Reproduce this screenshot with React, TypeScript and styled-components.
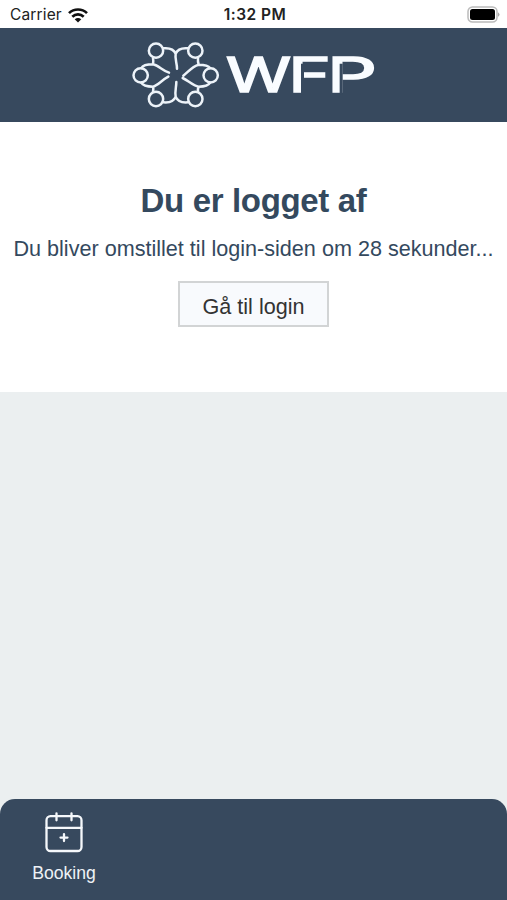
import React from 'react';
import styled, { createGlobalStyle } from 'styled-components';

const navy = '#37495e';

const GlobalStyle = createGlobalStyle`
  * { box-sizing: border-box; }
  body { margin: 0; background: #ebeff0; }
`;

const Screen = styled.div`
  display: flex;
  flex-direction: column;
  height: 900px;
  width: 507px;
  overflow: hidden;
  background: #ebeff0;
  font-family: 'Liberation Sans', Arial, sans-serif;
`;

const StatusBar = styled.div`
  display: grid;
  grid-template-columns: 1fr auto 1fr;
  align-items: center;
  height: 28px;
  padding: 2px 7px 0 10px;
  background: #fff;
  color: #222;
  font: 400 15.5px/26px Inter, sans-serif;
`;

const Carrier = styled.div`
  display: flex;
  align-items: center;
  gap: 6px;
  letter-spacing: 0.15px;
`;

const Clock = styled.div`
  font-weight: 600;
  font-size: 15.5px;
  letter-spacing: 0.5px;
`;

const BatterySlot = styled.div`
  display: flex;
  justify-content: flex-end;
  margin-top: -2px;
`;

const Header = styled.header`
  height: 94px;
  padding: 7px 0 0 125px;
  background: ${navy};
  svg { display: block; }
`;

const Panel = styled.main`
  display: flex;
  flex-direction: column;
  align-items: center;
  height: 270px;
  padding-top: 60px;
  background: #fff;
  color: #34495e;
`;

const Title = styled.h1`
  margin: 0;
  font-size: 33px;
  line-height: 38px;
  font-weight: 700;
  letter-spacing: -0.35px;
  white-space: nowrap;
`;

const Message = styled.p`
  margin: 16px 0 0;
  font-size: 21.6px;
  line-height: 26px;
  white-space: nowrap;
`;

const LoginButton = styled.button`
  width: 151px;
  height: 46px;
  margin-top: 19px;
  padding: 5px 0 0;
  border: 2px solid #d2d4d5;
  background: #f8fafd;
  color: #333;
  font: 400 21.6px/26px 'Liberation Sans', Arial, sans-serif;
`;

const TabBar = styled.nav`
  display: flex;
  height: 101px;
  margin-top: auto;
  background: ${navy};
  border-radius: 15px 15px 0 0;
`;

const Tab = styled.div`
  display: flex;
  flex-direction: column;
  align-items: center;
  width: 128px;
  padding-top: 13px;
  color: #eef2f6;
  font-size: 17.6px;
  line-height: 22px;
  gap: 8px;
`;

const WifiIcon = () => (
  <svg width="20" height="15" viewBox="0 0 20 15" fill="none" stroke="#111" strokeWidth="2.7">
    <path d="M1 5.1C6 .3 14 .3 19 5.1" />
    <path d="M4.3 8.7C7.5 5.7 12.5 5.7 15.7 8.7" />
    <path d="M10 14.6 6.7 11.3Q10 8.5 13.3 11.3Z" fill="#111" stroke="none" />
  </svg>
);

const BatteryIcon = () => (
  <svg width="33" height="17" viewBox="0 0 33 17">
    <rect x="1" y="1" width="29" height="15" rx="4.5" fill="#fff" stroke="#bbb" strokeWidth="1.5" />
    <rect x="3" y="3" width="25" height="11" rx="2.5" fill="#000" />
    <path d="M31 6.2Q34 8.5 31 10.8Z" fill="#aaa" />
  </svg>
);

const Logo = () => (
  <svg width="260" height="80" viewBox="0 0 780 240">
    <g fill="none" stroke="#edf3f9" strokeWidth="7.5" strokeLinecap="round" strokeLinejoin="round">
      <circle cx="93" cy="47" r="21.5" />
      <circle cx="211" cy="47" r="21.5" />
      <circle cx="47" cy="121" r="21.5" />
      <circle cx="257" cy="121" r="21.5" />
      <circle cx="93" cy="192" r="21.5" />
      <circle cx="211" cy="192" r="21.5" />
      <path d="M115 40C135 38 147 44 152 56C157 44 169 38 189 40M152 56C149 72 156 84 156 101" />
      <path d="M115 202C135 204 147 198 152 185C157 198 169 204 189 202M152 185C149 170 154 157 154 141" />
      <path d="M84 69Q86 80 84 88C68 88 54 90 49 99M84 88C101 91 111 106 132 113" />
      <path d="M49 143C54 153 68 155 84 155Q86 161 84 170M84 155C98 151 111 135 130 125" />
      <path d="M219 69Q218 80 221 89C236 89 250 91 255 99M221 89C202 94 190 110 175 122" />
      <path d="M255 143C250 153 236 155 221 155Q218 161 219 170M221 155C203 151 190 137 173 129" />
    </g>
    <g fill="#f9fcff" stroke="#f9fcff" strokeWidth="5" fontFamily="Inter, sans-serif" fontWeight="400" fontSize="145">
      <text x="303" y="172" textLength="195" lengthAdjust="spacingAndGlyphs">W</text>
      <text x="490" y="172" textLength="128" lengthAdjust="spacingAndGlyphs">F</text>
      <text x="606" y="172" textLength="150" lengthAdjust="spacingAndGlyphs">P</text>
    </g>
    <path d="M532.5 86v92M648.5 86v92" stroke={navy} strokeWidth="9" />
  </svg>
);

const CalendarIcon = () => (
  <svg width="38" height="42" viewBox="0 0 38 42" fill="none" stroke="#f5f8fb" strokeWidth="2.3" strokeLinecap="round">
    <rect x="1.5" y="4.2" width="35" height="34.8" rx="4" />
    <path d="M1.5 15.8h35M11.5 1.3v7M26.5 1.3v7M15.5 25.6h7M19 22.1v7" />
  </svg>
);

export default function App() {
  return (
    <>
      <GlobalStyle />
      <Screen>
        <StatusBar>
          <Carrier>Carrier <WifiIcon /></Carrier>
          <Clock>1:32 PM</Clock>
          <BatterySlot><BatteryIcon /></BatterySlot>
        </StatusBar>
        <Header><Logo /></Header>
        <Panel>
          <Title>Du er logget af</Title>
          <Message>Du bliver omstillet til login-siden om 28 sekunder...</Message>
          <LoginButton>Gå til login</LoginButton>
        </Panel>
        <TabBar>
          <Tab><CalendarIcon />Booking</Tab>
        </TabBar>
      </Screen>
    </>
  );
}
